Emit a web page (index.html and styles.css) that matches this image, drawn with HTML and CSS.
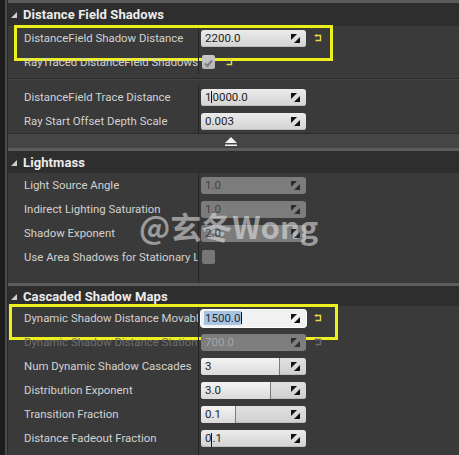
FILE: index.html
```html
<!DOCTYPE html>
<html>
<head>
<meta charset="utf-8">
<link rel="stylesheet" href="styles.css">
</head>
<body>
<div class="app">
  <div class="gutter"></div>
  <div class="panel">

    <section class="cat cat-1">
      <div class="cat-head"><span class="tri"></span>Distance Field Shadows</div>
      <div class="cat-body">
        <div class="row hl hl-a">
          <div class="label">DistanceField Shadow Distance</div>
          <div class="value">
            <div class="box"><span class="txt">2200.0</span><svg class="spin" viewBox="0 0 9 9"><polygon points="0,0 6,0 0,6"/><polygon points="9,3 9,9 3,9"/></svg></div>
            <svg class="reset" viewBox="0 0 8 8"><path d="M2.5 1.5 H6.5 V6.5 H1.5"/><polygon class="rh" points="0,1.5 3,0 3,3"/></svg>
          </div>
        </div>
        <div class="row">
          <div class="label">RayTraced DistanceField Shadows</div>
          <div class="value">
            <div class="check"><svg viewBox="0 0 13 13"><path d="M3 6.5 L5.5 9 L10 3.5"/></svg></div>
            <svg class="reset reset-c" viewBox="0 0 8 8"><path d="M2.5 1.5 H6.5 V6.5 H1.5"/><polygon class="rh" points="0,1.5 3,0 3,3"/></svg>
          </div>
        </div>
        <div class="sep"></div>
        <div class="row">
          <div class="label">DistanceField Trace Distance</div>
          <div class="value">
            <div class="box"><span class="txt">1<i class="caret"></i>0000.0</span><svg class="spin" viewBox="0 0 9 9"><polygon points="0,0 6,0 0,6"/><polygon points="9,3 9,9 3,9"/></svg></div>
          </div>
        </div>
        <div class="row">
          <div class="label">Ray Start Offset Depth Scale</div>
          <div class="value">
            <div class="box"><span class="txt">0.003</span><svg class="spin" viewBox="0 0 9 9"><polygon points="0,0 6,0 0,6"/><polygon points="9,3 9,9 3,9"/></svg></div>
          </div>
        </div>
        <div class="adv"><svg viewBox="0 0 12 9"><polygon points="6,0 12,6 0,6"/><rect x="0" y="7.5" width="12" height="1.5"/></svg></div>
      </div>
    </section>

    <section class="cat cat-2">
      <div class="cat-head"><span class="tri"></span>Lightmass</div>
      <div class="cat-body">
        <div class="row">
          <div class="label">Light Source Angle</div>
          <div class="value"><div class="box dis"><span class="txt">1.0</span><svg class="spin" viewBox="0 0 9 9"><polygon points="0,0 6,0 0,6"/><polygon points="9,3 9,9 3,9"/></svg></div></div>
        </div>
        <div class="row">
          <div class="label">Indirect Lighting Saturation</div>
          <div class="value"><div class="box dis"><span class="txt">1.0</span><svg class="spin" viewBox="0 0 9 9"><polygon points="0,0 6,0 0,6"/><polygon points="9,3 9,9 3,9"/></svg></div></div>
        </div>
        <div class="row">
          <div class="label">Shadow Exponent</div>
          <div class="value"><div class="box dis"><span class="txt">2.0</span><svg class="spin" viewBox="0 0 9 9"><polygon points="0,0 6,0 0,6"/><polygon points="9,3 9,9 3,9"/></svg></div></div>
        </div>
        <div class="row">
          <div class="label">Use Area Shadows for Stationary Light</div>
          <div class="value"><div class="check dis"></div></div>
        </div>
        <div class="row filler"><div class="label"></div><div class="value"></div></div>
      </div>
    </section>

    <section class="cat cat-3">
      <div class="cat-head"><span class="tri"></span>Cascaded Shadow Maps</div>
      <div class="cat-body">
        <div class="row hl hl-b">
          <div class="label">Dynamic Shadow Distance Movable Light</div>
          <div class="value">
            <div class="box focus"><span class="txt"><span class="sel">1500.0</span><i class="caret"></i></span><svg class="spin" viewBox="0 0 9 9"><polygon points="0,0 6,0 0,6"/><polygon points="9,3 9,9 3,9"/></svg></div>
            <svg class="reset" viewBox="0 0 8 8"><path d="M2.5 1.5 H6.5 V6.5 H1.5"/><polygon class="rh" points="0,1.5 3,0 3,3"/></svg>
          </div>
        </div>
        <div class="row off">
          <div class="label">Dynamic Shadow Distance Stationary Light</div>
          <div class="value">
            <div class="box dis2"><span class="txt">700.0</span><svg class="spin" viewBox="0 0 9 9"><polygon points="0,0 6,0 0,6"/><polygon points="9,3 9,9 3,9"/></svg></div>
            <svg class="reset reset-off" viewBox="0 0 8 8"><path d="M2.5 1.5 H6.5 V6.5 H1.5"/><polygon class="rh" points="0,1.5 3,0 3,3"/></svg>
          </div>
        </div>
        <div class="row">
          <div class="label">Num Dynamic Shadow Cascades</div>
          <div class="value"><div class="box slider"><div class="fill" style="width:79px"></div><span class="txt">3</span><svg class="spin" viewBox="0 0 9 9"><polygon points="0,0 6,0 0,6"/><polygon points="9,3 9,9 3,9"/></svg></div></div>
        </div>
        <div class="row">
          <div class="label">Distribution Exponent</div>
          <div class="value"><div class="box slider"><div class="fill" style="width:70px"></div><span class="txt">3.0</span><svg class="spin" viewBox="0 0 9 9"><polygon points="0,0 6,0 0,6"/><polygon points="9,3 9,9 3,9"/></svg></div></div>
        </div>
        <div class="row">
          <div class="label">Transition Fraction</div>
          <div class="value"><div class="box slider"><div class="fill" style="width:35px"></div><span class="txt">0.1</span><svg class="spin" viewBox="0 0 9 9"><polygon points="0,0 6,0 0,6"/><polygon points="9,3 9,9 3,9"/></svg></div></div>
        </div>
        <div class="row">
          <div class="label">Distance Fadeout Fraction</div>
          <div class="value"><div class="box"><span class="txt">0<i class="caret long"></i>.1</span><svg class="spin" viewBox="0 0 9 9"><polygon points="0,0 6,0 0,6"/><polygon points="9,3 9,9 3,9"/></svg></div></div>
        </div>
        <div class="row filler"><div class="label"></div><div class="value"></div></div>
      </div>
    </section>

  </div>
  <div class="watermark">@玄冬Wong</div>
</div>
</body>
</html>
```

FILE: styles.css
```css
* { box-sizing: border-box; }
html, body { margin: 0; padding: 0; background: #3b3b3b; }
body { font-family: Roboto, "Liberation Sans", sans-serif; }

.app {
  position: relative;
  display: flex;
  width: 459px;
  height: 455px;
  overflow: hidden;
  background: #3b3b3b;
}
.gutter {
  width: 7px;
  flex: none;
  background: #1c1c1c;
  border-right: 2px solid #4a4a4a;
}
.panel {
  flex: 1;
  display: flex;
  flex-direction: column;
  background: #3a3a3a;
  border-left: 1px solid #2a2a2a;
}

.cat { display: flex; flex-direction: column; }
.cat-head {
  height: 24px;
  border-top: 3px solid #5b5b5b;
  background: #2e2e2e;
  color: #ececec;
  font-weight: bold;
  font-size: 13px;
  display: flex;
  align-items: center;
  padding-left: 3px;
  letter-spacing: 0.1px;
}
.cat-1 .cat-head { height: 26px; }
.cat-2 .cat-head { height: 25px; }
.cat-3 .cat-head { height: 23px; }
.tri {
  width: 0; height: 0;
  border-left: 6px solid transparent;
  border-bottom: 6px solid #cfcfcf;
  margin-right: 6px;
  margin-top: 1px;
}
.cat-body { display: flex; flex-direction: column; background: #3a3a3a; }

.row {
  position: relative;
  display: flex;
  height: 24px;
  align-items: stretch;
}
.label {
  width: 191px;
  flex: none;
  border-right: 1px solid #242424;
  color: #d2d2d2;
  font-size: 11.4px;
  padding-left: 16px;
  display: flex;
  align-items: center;
  white-space: nowrap;
  overflow: hidden;
}
.value {
  flex: 1;
  display: flex;
  align-items: center;
  padding-left: 2px;
}
.off .label { color: #6e6e6e; }
.filler { height: 14px; }
.cat-3 .filler { height: 10px; }

.sep {
  height: 11px;
  border-top: 4px solid #3a3a3a;
  background: linear-gradient(#2b2b2b 0 1px, #444 1px 2px, #3a3a3a 2px);
}
.adv {
  height: 15px;
  background: #454545;
  border-top: 1px solid #2c2c2c;
  display: flex;
  align-items: center;
  justify-content: flex-start;
  padding-left: 217px;
}
.adv svg { width: 12px; height: 9px; fill: #f2f2f2; }

.box {
  position: relative;
  width: 105px;
  height: 17px;
  border-radius: 3px;
  background: linear-gradient(#ebebeb, #d3d3d3);
  display: flex;
  align-items: center;
  padding-left: 4px;
  font-size: 11.5px;
  color: #1e1e1e;
  box-shadow: inset 0 -1px 0 #bdbdbd;
  overflow: hidden;
}
.box .txt { position: relative; z-index: 1; flex: 1; display: flex; align-items: center; }
.box .spin { width: 9px; height: 9px; margin-right: 6px; position: relative; z-index: 1; flex: none; }
.spin polygon { fill: #111; }
.box.dis { background: #7c7c7c; color: #444; box-shadow: none; }
.box.dis .spin polygon { fill: #2c2c2c; }
.box.dis2 { background: #7e7e7e; color: #a6a6a6; box-shadow: none; }
.box.dis2 .spin polygon { fill: #2f2f2f; }
.box.focus { background: #f1f1f1; box-shadow: 0 0 0 1px #ffffff; }
.sel { background: #a8c4e0; color: #1c2c44; padding: 0 1px; margin-left: -1px; }
.caret { display: inline-block; width: 1px; height: 12px; background: #111; }
.caret.long { height: 15px; margin-top: 4px; }

.slider .fill {
  position: absolute;
  left: 0; top: 0; bottom: 0;
  background: linear-gradient(#f4f4f4, #dadada);
  border-right: 1px solid #7a7a7a;
}
.slider { background: linear-gradient(#e0e0e0, #d0d0d0); }

.reset {
  width: 8px; height: 8px;
  margin-left: 8px;
  overflow: visible;
}
.reset path { fill: none; stroke: #e8d848; stroke-width: 1.4; }
.reset .rh { fill: #e8d848; }
.reset-c { margin-left: 10px; }
.reset-off path { stroke: #6c6c6c; }
.reset-off .rh { fill: #6c6c6c; }

.check {
  width: 13px; height: 14px;
  margin-left: 1px;
  background: linear-gradient(#c9c9c9, #b5b5b5);
  border-radius: 2px;
}
.check svg { width: 13px; height: 13px; }
.check path { fill: none; stroke: #7e7e7e; stroke-width: 2; }
.check.dis { background: #777; }

.hl::after {
  content: "";
  position: absolute;
  border: 3px solid #eef01e;
  pointer-events: none;
}
.hl-a::after { left: 6px; top: -1px; width: 313px; height: 30px; }
.hl-b::after { left: 1px; top: -2px; width: 323px; height: 30px; }

.watermark {
  position: absolute;
  left: 139px;
  top: 203px;
  font-family: "Noto Sans CJK SC", "Noto Sans", sans-serif;
  font-weight: bold;
  font-size: 31px;
  color: rgba(230, 230, 230, 0.58);
  letter-spacing: 0px;
  pointer-events: none;
  white-space: nowrap;
}
```
